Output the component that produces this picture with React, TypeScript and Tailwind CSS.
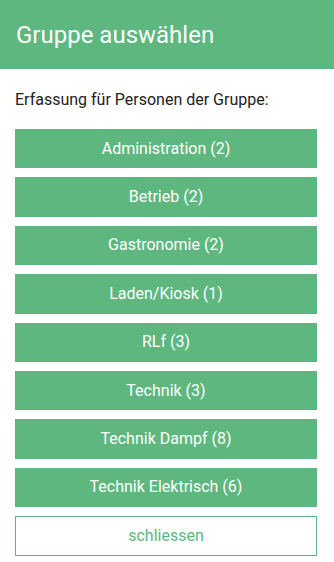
const groups = [
  "Administration (2)",
  "Betrieb (2)",
  "Gastronomie (2)",
  "Laden/Kiosk (1)",
  "RLf (3)",
  "Technik (3)",
  "Technik Dampf (8)",
  "Technik Elektrisch (6)",
];

const App = () => {
  return (
    <div
      className="w-[334px] h-[562px] bg-white"
      style={{ fontFamily: "Roboto, 'Liberation Sans', sans-serif" }}
    >
      {/* Header */}
      <div className="h-[69px] bg-[#5db77f] flex items-center px-4">
        <h1 className="text-white text-[24px] leading-none">Gruppe auswählen</h1>
      </div>

      <div className="pl-[15px] pr-[17px] pt-[21px]">
        <p className="text-[16px] leading-5 text-[#222]">Erfassung für Personen der Gruppe:</p>

        <div className="flex flex-col gap-[9px] mt-[19px]">
          {groups.map((g) => (
            <button
              key={g}
              className="h-[39.4px] w-full bg-[#5db77f] text-white text-[16px] flex items-center justify-center"
            >
              {g}
            </button>
          ))}
          <button className="h-[39.4px] w-full bg-white border border-[#5db77f] text-[#5db77f] text-[16px] flex items-center justify-center">
            schliessen
          </button>
        </div>
      </div>
    </div>
  );
};

export default App;
